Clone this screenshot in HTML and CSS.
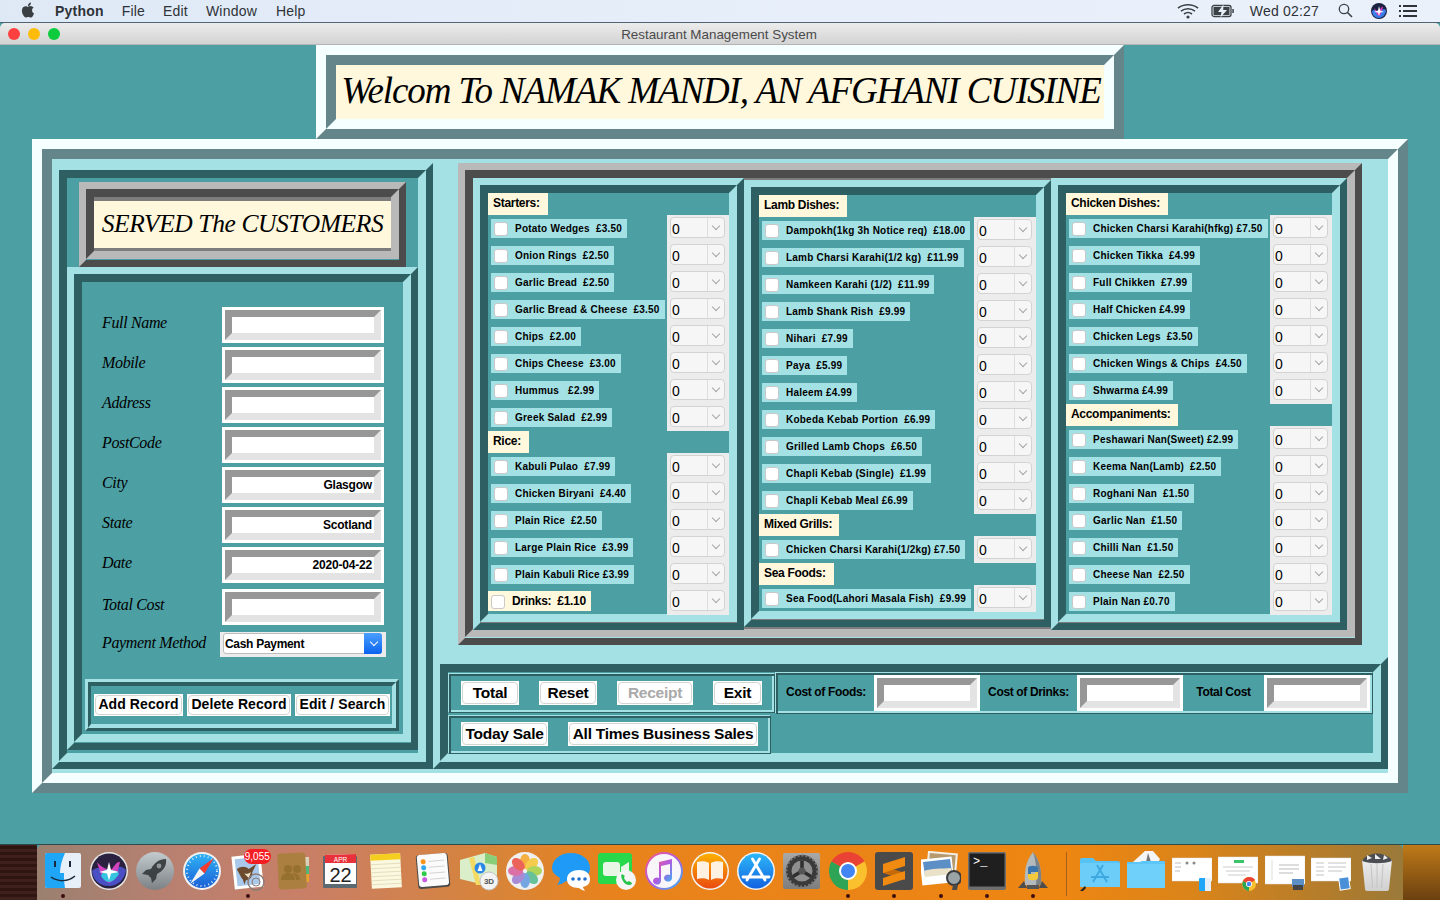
FILE: index.html
```
<!DOCTYPE html>
<html lang="en">
<head>
<meta charset="utf-8">
<title>Restaurant Management System</title>
<link rel="stylesheet" href="styles.css">
</head>
<body>
<header class="menubar">
  <svg class="apple" viewBox="0 0 24 24"><path fill="#3a3f44" d="M18.71 19.5c-.83 1.24-1.71 2.45-3.05 2.47-1.34.03-1.77-.79-3.29-.79-1.53 0-2 .77-3.27.82-1.31.05-2.3-1.32-3.14-2.53C4.25 17 2.94 12.45 4.7 9.39c.87-1.52 2.43-2.48 4.12-2.51 1.28-.02 2.5.87 3.29.87.78 0 2.26-1.07 3.81-.91.65.03 2.47.26 3.64 1.98-.09.06-2.17 1.28-2.15 3.81.03 3.02 2.65 4.03 2.68 4.04-.03.07-.42 1.44-1.38 2.83M13 3.5c.73-.83 1.94-1.46 2.94-1.5.13 1.17-.34 2.35-1.04 3.19-.69.85-1.83 1.51-2.95 1.42-.15-1.15.41-2.35 1.05-3.11z"/></svg>
  <b class="m-app">Python</b><span class="m-file">File</span><span class="m-edit">Edit</span><span class="m-win">Window</span><span class="m-help">Help</span>
  <div class="menu-right">
    <svg class="m-wifi" width="22" height="16" viewBox="0 0 22 16"><g fill="none" stroke="#3c4146" stroke-width="1.6"><path d="M1 5.2C6.5.6 15.5.6 21 5.2"/><path d="M4 8.2c4-3.2 10-3.2 14 0"/><path d="M7 11c2.400-1.800 5.600-1.800 8 0"/></g><circle cx="11" cy="14" r="1.600" fill="#3c4146"/></svg>
    <svg class="m-batt" width="24" height="14" viewBox="0 0 24 14"><rect x="1" y="1.500" width="19" height="11" rx="2" fill="none" stroke="#3c4146" stroke-width="1.300"/><rect x="2.500" y="3" width="16" height="8" fill="#3c4146"/><path d="M12.500 .5 7 8h3.500l-1 5.500L16 6h-3.800z" fill="#e9eff9"/><rect x="21.300" y="5" width="1.500" height="4" fill="#3c4146"/></svg>
    <span class="m-clock">Wed 02:27</span>
    <svg class="m-search" width="15" height="15" viewBox="0 0 15 15"><circle cx="6" cy="6" r="4.700" fill="none" stroke="#3c4146" stroke-width="1.300"/><path d="M9.500 9.500 14 14" stroke="#3c4146" stroke-width="1.600"/></svg>
    <svg class="m-siri" width="16" height="16" viewBox="0 0 16 16"><circle cx="8" cy="8" r="8" fill="#1a2040"/><path d="M1 8c3-3 4 1 7 1s3-5 7-2c0 4-3 8-7 8S1 12 1 8z" fill="#3b7de8"/><path d="M3 5c3 4 4 3 5 3s2-5 4-4c-1 4-2 8-4 9-2-1-4-5-5-8z" fill="#d13fc0"/><path d="M8 3l1.200 4.500L13 9l-4 .6L8 13l-1-3.400L3 9l4-1.500z" fill="#fff"/></svg>
    <svg class="m-list" width="18" height="12" viewBox="0 0 18 12"><g fill="#2f3338"><rect width="2" height="2"/><rect y="5" width="2" height="2"/><rect y="10" width="2" height="2"/><rect x="4" width="14" height="2"/><rect x="4" y="5" width="14" height="2"/><rect x="4" y="10" width="14" height="2"/></g></svg>
  </div>
</header>

<div class="titlebar">
  <div class="lights"><i class="light red"></i><i class="light amber"></i><i class="light green"></i></div>
  <span class="title">Restaurant Management System</span>
</div>

<main class="window">
  <section class="r-main r-head">
    <div class="r-main-in"><h1 class="welcome">Welcom To NAMAK MANDI, AN AFGHANI CUISINE</h1></div>
  </section>

  <section class="r-main r-body">
    <div class="r-main-in body-in">

      <div class="r-teal left">
        <div class="r-teal-in left-in">
          <div class="r-gray served">
            <div class="r-gray-in served-in"><h2 class="served-text">SERVED The CUSTOMERS</h2></div>
          </div>
          <div class="r-teal form-frame">
            <div class="r-teal-in form-in">
              <div class="form-row"><span class="f-label">Full Name</span><div class="entry e-form"><div class="entry-in"></div></div></div>
              <div class="form-row"><span class="f-label">Mobile</span><div class="entry e-form"><div class="entry-in"></div></div></div>
              <div class="form-row"><span class="f-label">Address</span><div class="entry e-form"><div class="entry-in"></div></div></div>
              <div class="form-row"><span class="f-label">PostCode</span><div class="entry e-form"><div class="entry-in"></div></div></div>
              <div class="form-row"><span class="f-label">City</span><div class="entry e-form"><div class="entry-in">Glasgow</div></div></div>
              <div class="form-row"><span class="f-label">State</span><div class="entry e-form"><div class="entry-in">Scotland</div></div></div>
              <div class="form-row"><span class="f-label">Date</span><div class="entry e-form"><div class="entry-in">2020-04-22</div></div></div>
              <div class="form-row row-cost"><span class="f-label">Total Cost</span><div class="entry e-form"><div class="entry-in"></div></div></div>
              <div class="form-row row-pay"><span class="f-label">Payment Method</span>
                <div class="select"><div class="select-in"><span class="select-val">Cash Payment</span><span class="select-btn"></span></div></div>
              </div>
              <div class="record-frame">
                <div class="record-in">
                  <button class="btn b14 w89"><span>Add Record</span></button>
                  <button class="btn b14 w104"><span>Delete Record</span></button>
                  <button class="btn b14 w95"><span>Edit / Search</span></button>
                </div>
              </div>
            </div>
          </div>
        </div>
      </div>

      <div class="right">
        <div class="r-gray menu-frame">
          <div class="r-gray-in menu-in">

            <div class="r-teal col col1"><div class="r-teal-in col-in">
              <div class="head h-starters">Starters:</div>
              <div class="rows">
                <div class="row"><span class="item"><i class="box"></i>Potato Wedges  £3.50</span><div class="spin"><span class="sp">0</span></div></div>
                <div class="row"><span class="item"><i class="box"></i>Onion Rings  £2.50</span><div class="spin"><span class="sp">0</span></div></div>
                <div class="row"><span class="item"><i class="box"></i>Garlic Bread  £2.50</span><div class="spin"><span class="sp">0</span></div></div>
                <div class="row"><span class="item"><i class="box"></i>Garlic Bread &amp; Cheese  £3.50</span><div class="spin"><span class="sp">0</span></div></div>
                <div class="row"><span class="item"><i class="box"></i>Chips  £2.00</span><div class="spin"><span class="sp">0</span></div></div>
                <div class="row"><span class="item"><i class="box"></i>Chips Cheese  £3.00</span><div class="spin"><span class="sp">0</span></div></div>
                <div class="row"><span class="item"><i class="box"></i>Hummus   £2.99</span><div class="spin"><span class="sp">0</span></div></div>
                <div class="row"><span class="item"><i class="box"></i>Greek Salad  £2.99</span><div class="spin"><span class="sp">0</span></div></div>
              </div>
              <div class="head h-rice">Rice:</div>
              <div class="rows">
                <div class="row"><span class="item"><i class="box"></i>Kabuli Pulao  £7.99</span><div class="spin"><span class="sp">0</span></div></div>
                <div class="row"><span class="item"><i class="box"></i>Chicken Biryani  £4.40</span><div class="spin"><span class="sp">0</span></div></div>
                <div class="row"><span class="item"><i class="box"></i>Plain Rice  £2.50</span><div class="spin"><span class="sp">0</span></div></div>
                <div class="row"><span class="item"><i class="box"></i>Large Plain Rice  £3.99</span><div class="spin"><span class="sp">0</span></div></div>
                <div class="row"><span class="item"><i class="box"></i>Plain Kabuli Rice £3.99</span><div class="spin"><span class="sp">0</span></div></div>
                <div class="row"><span class="drink"><i class="box"></i>Drinks:  £1.10</span><div class="spin"><span class="sp">0</span></div></div>
              </div>
            </div></div>

            <div class="r-teal col col2"><div class="r-teal-in col-in">
              <div class="head h-lamb">Lamb Dishes:</div>
              <div class="rows">
                <div class="row"><span class="item"><i class="box"></i>Dampokh(1kg 3h Notice req)  £18.00</span><div class="spin"><span class="sp">0</span></div></div>
                <div class="row"><span class="item"><i class="box"></i>Lamb Charsi Karahi(1/2 kg)  £11.99</span><div class="spin"><span class="sp">0</span></div></div>
                <div class="row"><span class="item"><i class="box"></i>Namkeen Karahi (1/2)  £11.99</span><div class="spin"><span class="sp">0</span></div></div>
                <div class="row"><span class="item"><i class="box"></i>Lamb Shank Rish  £9.99</span><div class="spin"><span class="sp">0</span></div></div>
                <div class="row"><span class="item"><i class="box"></i>Nihari  £7.99</span><div class="spin"><span class="sp">0</span></div></div>
                <div class="row"><span class="item"><i class="box"></i>Paya  £5.99</span><div class="spin"><span class="sp">0</span></div></div>
                <div class="row"><span class="item"><i class="box"></i>Haleem £4.99</span><div class="spin"><span class="sp">0</span></div></div>
                <div class="row"><span class="item"><i class="box"></i>Kobeda Kebab Portion  £6.99</span><div class="spin"><span class="sp">0</span></div></div>
                <div class="row"><span class="item"><i class="box"></i>Grilled Lamb Chops  £6.50</span><div class="spin"><span class="sp">0</span></div></div>
                <div class="row"><span class="item"><i class="box"></i>Chapli Kebab (Single)  £1.99</span><div class="spin"><span class="sp">0</span></div></div>
                <div class="row"><span class="item"><i class="box"></i>Chapli Kebab Meal £6.99</span><div class="spin"><span class="sp">0</span></div></div>
              </div>
              <div class="head h-mixed">Mixed Grills:</div>
              <div class="rows">
                <div class="row"><span class="item"><i class="box"></i>Chicken Charsi Karahi(1/2kg) £7.50</span><div class="spin"><span class="sp">0</span></div></div>
              </div>
              <div class="head h-sea">Sea Foods:</div>
              <div class="rows">
                <div class="row"><span class="item"><i class="box"></i>Sea Food(Lahori Masala Fish)  £9.99</span><div class="spin"><span class="sp">0</span></div></div>
              </div>
            </div></div>

            <div class="r-teal col col3"><div class="r-teal-in col-in">
              <div class="head h-chicken">Chicken Dishes:</div>
              <div class="rows">
                <div class="row"><span class="item"><i class="box"></i>Chicken Charsi Karahi(hfkg) £7.50</span><div class="spin"><span class="sp">0</span></div></div>
                <div class="row"><span class="item"><i class="box"></i>Chicken Tikka  £4.99</span><div class="spin"><span class="sp">0</span></div></div>
                <div class="row"><span class="item"><i class="box"></i>Full Chikken  £7.99</span><div class="spin"><span class="sp">0</span></div></div>
                <div class="row"><span class="item"><i class="box"></i>Half Chicken £4.99</span><div class="spin"><span class="sp">0</span></div></div>
                <div class="row"><span class="item"><i class="box"></i>Chicken Legs  £3.50</span><div class="spin"><span class="sp">0</span></div></div>
                <div class="row"><span class="item"><i class="box"></i>Chicken Wings &amp; Chips  £4.50</span><div class="spin"><span class="sp">0</span></div></div>
                <div class="row"><span class="item"><i class="box"></i>Shwarma £4.99</span><div class="spin"><span class="sp">0</span></div></div>
              </div>
              <div class="head h-acc">Accompaniments:</div>
              <div class="rows">
                <div class="row"><span class="item"><i class="box"></i>Peshawari Nan(Sweet) £2.99</span><div class="spin"><span class="sp">0</span></div></div>
                <div class="row"><span class="item"><i class="box"></i>Keema Nan(Lamb)  £2.50</span><div class="spin"><span class="sp">0</span></div></div>
                <div class="row"><span class="item"><i class="box"></i>Roghani Nan  £1.50</span><div class="spin"><span class="sp">0</span></div></div>
                <div class="row"><span class="item"><i class="box"></i>Garlic Nan  £1.50</span><div class="spin"><span class="sp">0</span></div></div>
                <div class="row"><span class="item"><i class="box"></i>Chilli Nan  £1.50</span><div class="spin"><span class="sp">0</span></div></div>
                <div class="row"><span class="item"><i class="box"></i>Cheese Nan  £2.50</span><div class="spin"><span class="sp">0</span></div></div>
                <div class="row"><span class="item"><i class="box"></i>Plain Nan £0.70</span><div class="spin"><span class="sp">0</span></div></div>
              </div>
            </div></div>

          </div>
        </div>

        <div class="r-teal bottom">
          <div class="r-teal-in bottom-in">
            <div class="bottom-left">
              <div class="thin t-actions">
                <button class="btn b15 w58"><span>Total</span></button>
                <button class="btn b15 w58"><span>Reset</span></button>
                <button class="btn b15 w76 off"><span>Receipt</span></button>
                <button class="btn b15 w49"><span>Exit</span></button>
              </div>
              <div class="thin t-sales">
                <button class="btn b15 w87"><span>Today Sale</span></button>
                <button class="btn b15 w190"><span>All Times Business Sales</span></button>
              </div>
            </div>
            <div class="thin t-costs">
              <span class="c-label c96">Cost of Foods:</span><div class="entry e-cost"><div class="entry-in"></div></div>
              <span class="c-label c97">Cost of Drinks:</span><div class="entry e-cost"><div class="entry-in"></div></div>
              <span class="c-label c81">Total Cost</span><div class="entry e-cost"><div class="entry-in"></div></div>
            </div>
          </div>
        </div>
      </div>

    </div>
  </section>
</main>

<footer class="desk">
  <div class="wall wall-l"></div>
  <nav class="dock">
    <div class="di run"><svg viewBox="0 0 40 40"><rect x="2" y="2" width="36" height="35" rx="2" fill="#e7eff8"/><path d="M4 2h18c-3 7-5 13-5 20h4c-.2 5 .2 10 1 15H4a2 2 0 0 1-2-2V4a2 2 0 0 1 2-2z" fill="#1fa6f7"/><path d="M12 10v6M27 10v6" stroke="#1a2a3a" stroke-width="2"/><path d="M8 26c7 5 17 5 24-1" fill="none" stroke="#1a2a3a" stroke-width="1.500"/></svg></div>
    <div class="di"><svg viewBox="0 0 40 40"><circle cx="20" cy="20" r="19" fill="#e6e6e6"/><circle cx="20" cy="20" r="17.500" fill="#2a2140"/><path d="M3 20c6-7 10 0 17 0s9-9 17-1c-1 9-8 16-17 16S4 29 3 20z" fill="#4a50c4"/><path d="M8 11c6 7 9 6 12 8s6-9 11-8c-2 9-5 19-11 21-6-3-10-13-12-21z" fill="#d043bd"/><path d="M12 25c3-7 6-7 8-6s8-1 10 4c-3 5-7 8-10 8s-6-3-8-6z" fill="#35c4e0"/><path d="M20 11l2 8 8 2-8 1.500-2 7-2-7-8-1.500 8-2z" fill="#fff"/></svg></div>
    <div class="di"><svg viewBox="0 0 40 40"><defs><linearGradient id="lp" x1="0" y1="0" x2="0" y2="1"><stop offset="0" stop-color="#c4cbce"/><stop offset="1" stop-color="#7b8184"/></linearGradient></defs><circle cx="20" cy="20" r="19" fill="url(#lp)"/><path d="M31 8c-7 0-12 4-15 10l-5 1-4 4 6 1 3 3 1 5 4-4 1-5c6-3 10-8 9-15z" fill="#3d4245"/><circle cx="24" cy="15" r="2.400" fill="#90979a"/></svg></div>
    <div class="di"><svg viewBox="0 0 40 40"><defs><linearGradient id="sf" x1="0" y1="0" x2="0" y2="1"><stop offset="0" stop-color="#2fb2f5"/><stop offset="1" stop-color="#1a5fd6"/></linearGradient></defs><circle cx="20" cy="20" r="19" fill="#f2f2f2"/><circle cx="20" cy="20" r="17" fill="url(#sf)"/><circle cx="20" cy="20" r="15" fill="none" stroke="#d5e8f8" stroke-width="2" stroke-dasharray="1 3"/><path d="M32 7 22.500 22.500 17.500 17.500z" fill="#f43b30"/><path d="M8 33 17.500 17.500 22.500 22.500z" fill="#f4f4f4"/></svg></div>
    <div class="di run"><svg viewBox="0 0 40 40"><g transform="rotate(-6 20 20)"><rect x="5" y="4" width="29" height="33" fill="#fff"/><rect x="8" y="7" width="23" height="27" fill="#a9c8ea"/><path d="M9 17c5-3 9-2 12 1l8-4-5 8c0 4-3 7-7 7l-2 4-1-5c-2-3-3-7-5-11z" fill="#6b4a2e"/><path d="M16 22c2 1 5 1 7-1l-3 6z" fill="#efe3c6"/></g><circle cx="28" cy="31" r="8" fill="none" stroke="#8a7d78" stroke-width="1.500"/><circle cx="28" cy="31" r="4" fill="none" stroke="#8a7d78"/></svg><span class="badge">9,055</span></div>
    <div class="di"><svg viewBox="0 0 40 40"><rect x="31" y="6" width="4" height="9" fill="#d9d2b8"/><rect x="31" y="15" width="4" height="8" fill="#4cb87a"/><rect x="31" y="23" width="4" height="8" fill="#e7a32c"/><rect x="4" y="2" width="28" height="36" rx="3" fill="#ab7f3f" transform="rotate(-3 18 20)"/><circle cx="14" cy="18" r="4" fill="#96702f"/><circle cx="23" cy="18" r="4" fill="#96702f"/><path d="M7 29c0-5 3-7 7-7s7 2 7 7zM18 22c5 0 8 2 8 7h-4c0-3-1-5-4-7z" fill="#96702f"/></svg></div>
    <div class="di"><svg viewBox="0 0 40 40"><rect x="3" y="5" width="34" height="32" rx="1" fill="#5a6972"/><path d="M5 4l31-1v30H5z" fill="#fff"/><path d="M5 4l31-1v9H5z" fill="#e8313a"/><text x="20.500" y="10.500" class="cal-m">APR</text><text x="20.500" y="31" class="cal-d">22</text></svg></div>
    <div class="di"><svg viewBox="0 0 40 40"><g transform="rotate(-3 20 20)"><rect x="5" y="3" width="30" height="34" fill="#fbf8e0"/><rect x="5" y="3" width="30" height="6" fill="#f5cf1f"/><path d="M5 13h30M5 17h30M5 21h30M5 25h30M5 29h30M5 33h30" stroke="#d9d4b0" stroke-width=".7"/></g></svg></div>
    <div class="di"><svg viewBox="0 0 40 40"><g transform="rotate(-5 20 20)"><rect x="4" y="3" width="32" height="34" rx="3" fill="#4a4a4a"/><rect x="5" y="3" width="30" height="32" rx="3" fill="#fbfbfb"/><circle cx="11" cy="10" r="2.500" fill="#f7941d"/><circle cx="11" cy="16" r="2.500" fill="#2ea8f0"/><circle cx="11" cy="22" r="2.500" fill="#2fcb4a"/><circle cx="11" cy="28" r="2.500" fill="#c75ae0"/><path d="M16 10h16M16 16h16M16 22h16M16 28h16" stroke="#d3d3d3"/></g></svg></div>
    <div class="di"><svg viewBox="0 0 40 40"><path d="M1 9 26 2l12 4v22l-12 6L1 28z" fill="#d9eec9"/><path d="M10 7l7 27 5 0L15 6z" fill="#f4d962"/><path d="M26 2l12 4v8l-12-2z" fill="#89cf7a"/><circle cx="21" cy="17" r="5.500" fill="#2a88e6"/><path d="M21 13l2.500 7h-5z" fill="#fff"/><circle cx="30" cy="30" r="9" fill="#f3f3f3" stroke="#c4c4c4"/><text x="30" y="33" class="map-3d">3D</text></svg></div>
    <div class="di"><svg viewBox="0 0 40 40"><circle cx="20" cy="20" r="19" fill="#f0f0f0"/><g opacity=".85"><ellipse cx="20" cy="10.500" rx="5" ry="7.500" fill="#f6a623"/><ellipse cx="20" cy="10.500" rx="5" ry="7.500" fill="#f7c531" transform="rotate(45 20 20)"/><ellipse cx="20" cy="10.500" rx="5" ry="7.500" fill="#a5cf3f" transform="rotate(90 20 20)"/><ellipse cx="20" cy="10.500" rx="5" ry="7.500" fill="#50b98a" transform="rotate(135 20 20)"/><ellipse cx="20" cy="10.500" rx="5" ry="7.500" fill="#5f9be0" transform="rotate(180 20 20)"/><ellipse cx="20" cy="10.500" rx="5" ry="7.500" fill="#9c7ad0" transform="rotate(225 20 20)"/><ellipse cx="20" cy="10.500" rx="5" ry="7.500" fill="#d75a9a" transform="rotate(270 20 20)"/><ellipse cx="20" cy="10.500" rx="5" ry="7.500" fill="#ec4c3f" transform="rotate(315 20 20)"/></g></svg></div>
    <div class="di"><svg viewBox="0 0 40 40"><path d="M20 2c10 0 19 6 19 15 0 8-8 14-18 14-2 0-4 0-6-1-2 2-5 3-9 4 2-2 3-5 3-7C4 24 1 21 1 17 1 8 10 2 20 2z" fill="#1f9bf7"/><path d="M28 19c6 0 11 3 11 9s-4 7-7 8c0 1 1 2 2 4-3-1-5-2-6-3-7 0-12-3-12-9s6-9 12-9z" fill="#fff"/><circle cx="22" cy="28" r="1.800" fill="#1f6fd0"/><circle cx="28" cy="28" r="1.800" fill="#1f6fd0"/><circle cx="34" cy="28" r="1.800" fill="#1f6fd0"/></svg></div>
    <div class="di"><svg viewBox="0 0 40 40"><rect x="1" y="2" width="34" height="31" rx="3" fill="#27d84a"/><rect x="6" y="11" width="17" height="14" rx="3" fill="#e8f6e6"/><path d="M24 16l8-5v14l-8-5z" fill="#e8f6e6"/><circle cx="29" cy="29" r="10" fill="#f5f5f5"/><path d="M25 23c-1 1-1 3 0 5 1 3 4 6 7 6 2 0 3-1 3-2l-3-2-2 1c-1-1-3-3-3-5l1-1z" fill="#27c24a"/></svg></div>
    <div class="di"><svg viewBox="0 0 40 40"><defs><linearGradient id="it" x1="0" y1="0" x2="1" y2="1"><stop offset="0" stop-color="#f85a8c"/><stop offset=".5" stop-color="#b05ae0"/><stop offset="1" stop-color="#2fb8f5"/></linearGradient></defs><circle cx="20" cy="20" r="19" fill="url(#it)"/><circle cx="20" cy="20" r="17" fill="#f8f6f8"/><path d="M15 11l13-3v19a4 3.500 0 1 1-2-3V13l-9 2v15a4 3.500 0 1 1-2-3z" fill="url(#it)"/></svg></div>
    <div class="di"><svg viewBox="0 0 40 40"><defs><linearGradient id="bk" x1="0" y1="0" x2="0" y2="1"><stop offset="0" stop-color="#fdb000"/><stop offset="1" stop-color="#ea4a10"/></linearGradient></defs><circle cx="20" cy="20" r="19" fill="#f4f4f4"/><circle cx="20" cy="20" r="17.500" fill="url(#bk)"/><path d="M19 12c-3-2-8-2-12-1v17c4-1 9-1 12 1zM21 12c3-2 8-2 12-1v17c-4-1-9-1-12 1z" fill="#fff1e2"/></svg></div>
    <div class="di"><svg viewBox="0 0 40 40"><defs><linearGradient id="as" x1="0" y1="0" x2="0" y2="1"><stop offset="0" stop-color="#2db8f8"/><stop offset="1" stop-color="#1262e0"/></linearGradient></defs><circle cx="20" cy="20" r="19" fill="#f4f4f4"/><circle cx="20" cy="20" r="17.500" fill="url(#as)"/><path d="M23.500 8 11 29M16.500 8 29 29M7 26h26" stroke="#fff" stroke-width="2.800" stroke-linecap="round"/></svg></div>
    <div class="di"><svg viewBox="0 0 40 40"><defs><linearGradient id="sp" x1="0" y1="0" x2="0" y2="1"><stop offset="0" stop-color="#a9a9a9"/><stop offset="1" stop-color="#7d7d7d"/></linearGradient></defs><rect x="1" y="2" width="37" height="36" rx="2" fill="url(#sp)"/><circle cx="20" cy="20" r="16" fill="#3a3a3a"/><circle cx="20" cy="20" r="15.500" fill="none" stroke="#777" stroke-width="2" stroke-dasharray="2 2"/><circle cx="20" cy="20" r="10.500" fill="#8f8f8f"/><path d="M20 20V9.500M20 20 11 25.500M20 20l9 5.500" stroke="#2e2e2e" stroke-width="3.500"/><circle cx="20" cy="20" r="3.500" fill="#555"/></svg></div>
    <div class="di run"><svg viewBox="0 0 40 40"><path d="M20 20 3.550 10.500A19 19 0 0 1 36.450 10.500z" fill="#ea4335"/><path d="M20 20 36.450 10.500A19 19 0 0 1 20 39z" fill="#fbc02d"/><path d="M20 20 20 39A19 19 0 0 1 3.550 10.500z" fill="#2ea456"/><circle cx="20" cy="20" r="9" fill="#fff"/><circle cx="20" cy="20" r="7" fill="#4285f4"/></svg></div>
    <div class="di run"><svg viewBox="0 0 40 40"><rect x="1" y="1" width="38" height="38" rx="3" fill="#4a4a4a"/><path d="M9 15 31 22v7L9 22z" fill="#c46a08"/><path d="M31 6 9 13v9l22-7zM31 20 9 27v8l22-7z" fill="#f08a10"/></svg></div>
    <div class="di run"><svg viewBox="0 0 40 40"><rect x="6" y="1" width="30" height="24" fill="#f3efe6" transform="rotate(5 20 12)"/><rect x="8" y="3" width="26" height="17" fill="#b59a70" transform="rotate(5 20 12)"/><rect x="0" y="7" width="32" height="26" fill="#fff" transform="rotate(-6 16 20)"/><path d="M2 11l27-3 2 14-27 3z" fill="#5d8fc7"/><path d="M3 20c8-3 17-2 27-3l1 6-27 3z" fill="#e9e2c8"/><circle cx="33" cy="27" r="7" fill="#9aa3a6" stroke="#3c3c3c" stroke-width="2"/><path d="M32 34l-1 5h5l1-5z" fill="#4a4a4a"/></svg></div>
    <div class="di run"><svg viewBox="0 0 40 40"><rect x="1" y="1" width="38" height="38" rx="2" fill="#6e6e6e"/><rect x="2.500" y="2.500" width="35" height="33" fill="#1f1f1f"/><text x="6" y="14" class="term">&gt;_</text></svg></div>
    <div class="di run"><svg viewBox="0 0 40 40"><path d="M11 30 5 37h9zM29 30l6 7h-9z" fill="#4d4d4d"/><path d="M20 1c7 9 9 18 8 33H12C11 19 13 10 20 1z" fill="#b4b9bc"/><path d="M20 1c3 9 4 18 3 33h5C29 19 27 10 20 1z" fill="#7c8286"/><path d="M15 17c0-3 10-3 10 0v4h-7v2h-3z" fill="#3a76ab"/><path d="M25 27c0 3-10 3-10 0v-4h7v-2h3z" fill="#f4c93a"/><rect x="14" y="34" width="12" height="4" fill="#555"/></svg></div>
    <div class="divider"><i></i></div>
    <div class="di"><svg viewBox="0 0 40 40"><path d="M0 9a2 2 0 0 1 2-2h11l3 3h22a2 2 0 0 1 2 2v22a2 2 0 0 1-2 2H2a2 2 0 0 1-2-2z" fill="#56c3f4"/><rect y="12" width="40" height="24" rx="1" fill="#6ccdf8"/><path d="M23 14 13 31M17 14l10 17M11 26h18" stroke="#3ea9e0" stroke-width="2"/><path d="M0 40l5-5 1 2-4 4z" fill="#222"/></svg></div>
    <div class="di"><svg viewBox="0 0 40 40"><path d="M7 11 19 0h8l7 8-3 6z" fill="#f5f5f5"/><path d="M22 2l3 9h-5z" fill="#777"/><path d="M1 11h13l2-1h22a1 1 0 0 1 1 1v25a1 1 0 0 1-1 1H1z" fill="#5bc6f7"/><rect x="1" y="13" width="38" height="24" fill="#6fd0fa"/></svg></div>
    <div class="di"><svg viewBox="0 0 40 40"><rect x="0" y="7" width="40" height="23" fill="#fff" stroke="#ddd" stroke-width=".5"/><path d="M3 12h6M3 16h6M3 20h5" stroke="#bbb"/><circle cx="15" cy="12" r="1.500" fill="#888"/><circle cx="22" cy="12" r="1.500" fill="#888"/><rect x="27" y="27" width="12" height="13" rx="1" fill="#1fa6f7"/><path d="M33 27h6v13h-6z" fill="#e7eff8"/></svg></div>
    <div class="di"><svg viewBox="0 0 40 40"><rect x="0" y="6" width="40" height="26" fill="#fff" stroke="#ddd" stroke-width=".5"/><rect x="16" y="9" width="10" height="3" fill="#3cc46a"/><path d="M5 16h30M8 20h24M10 24h18" stroke="#ccc"/><path d="M25 30a7 7 0 0 1 12-1l-6 4z" fill="#ea4335"/><circle cx="31" cy="33" r="7" fill="#fbc02d"/><path d="M31 33v7a7 7 0 0 1-6-10z" fill="#2ea456"/><path d="M25 30a7 7 0 0 1 12-1l-6 4z" fill="#ea4335"/><circle cx="31" cy="33" r="3" fill="#fff"/><circle cx="31" cy="33" r="2.200" fill="#4285f4"/></svg></div>
    <div class="di"><svg viewBox="0 0 40 40"><rect x="0" y="5" width="40" height="28" fill="#fff" stroke="#ddd" stroke-width=".5"/><path d="M7 9v20" stroke="#ddd"/><path d="M14 14h20M14 18h20M14 22h14" stroke="#bbb"/><rect x="27" y="28" width="12" height="8" fill="#5d8fc7"/><rect x="28" y="34" width="10" height="5" fill="#444"/></svg></div>
    <div class="di"><svg viewBox="0 0 40 40"><rect x="0" y="7" width="40" height="23" fill="#fff" stroke="#ddd" stroke-width=".5"/><path d="M5 12h8M5 16h8M5 20h8M5 24h8M17 12h18M17 16h18M17 20h14" stroke="#c4c4c4"/><g transform="rotate(-8 33 33)"><rect x="28" y="26" width="11" height="13" fill="#fff"/><rect x="29" y="27" width="9" height="11" fill="#4a90d9"/></g></svg></div>
    <div class="di"><svg viewBox="0 0 40 40"><defs><linearGradient id="tr" x1="0" y1="0" x2="0" y2="1"><stop offset="0" stop-color="#ececec"/><stop offset="1" stop-color="#cfcfcf"/></linearGradient></defs><path d="M5 9h30l-3 29a2 2 0 0 1-2 2H10a2 2 0 0 1-2-2z" fill="url(#tr)"/><path d="M7 7c8-6 18-6 26 0l2 3c-9 3-21 3-30 0z" fill="#4a4e52"/><path d="M10 4l5 3-5 2zM18 3l6 5h-6zM27 4l4 3-5 2z" fill="#eee"/><path d="M14 13l1.500 24M20 13v24M26 13l-1.500 24" stroke="#c4c4c4"/></svg></div>
  </nav>
  <div class="wall wall-r"></div>
</footer>
</body>
</html>
```

FILE: styles.css
```
* { box-sizing: border-box; }
html, body { margin: 0; padding: 0; }
body {
  width: 1440px; height: 900px; overflow: hidden;
  display: flex; flex-direction: column;
  font-family: "Liberation Sans", Arial, sans-serif;
  background: #4c9fa3; color: #000;
}
h1, h2 { margin: 0; font-weight: normal; }

/* menu bar */
.menubar {
  height: 23px; flex: none; display: flex; align-items: center;
  background: linear-gradient(90deg, #dfe9f6, #e6eef9 50%, #ebf1fb);
  border-bottom: 1px solid #4f6475;
  font-size: 14px; letter-spacing: .2px; color: #2f3338; padding-bottom: 1px;
}
.apple { width: 18px; height: 18px; margin: -2px 0 0 19px; }
.m-app { margin-left: 18px; }
.m-file { margin-left: 18px; }
.m-edit { margin-left: 18px; }
.m-win { margin-left: 18px; }
.m-help { margin-left: 19px; }
.menu-right { margin-left: auto; display: flex; align-items: center; padding-right: 23px; }
.m-clock { margin-left: 15px; }
.m-batt { margin-left: 12px; }
.m-search { margin-left: 19px; }
.m-siri { margin-left: 18px; }
.m-list { margin-left: 12px; }

/* title bar */
.titlebar {
  height: 22px; flex: none; display: flex; align-items: center;
  background: linear-gradient(#ececec, #d3d3d3);
  border-radius: 5px 5px 0 0; border-bottom: 1px solid #b4b4b4;
}
.lights { display: flex; gap: 8px; margin-left: 8px; }
.light { width: 12px; height: 12px; border-radius: 50%; display: block; }
.red { background: #fc4040; } .amber { background: #fdbc0c; } .green { background: #0ccb3d; }
.title { flex: 1; text-align: center; font-size: 13.400px; color: #4a4a4a; margin: 1px 0 0 -4px; padding-right: 58px; }

/* window */
.window { height: 799px; flex: none; display: flex; flex-direction: column; align-items: center; background: #4c9fa3; }

.r-main { border: 10px solid; border-color: #f6ffff #64868a #64868a #f6ffff; }
.r-main-in { border: 10px solid; border-color: #64868a #f6ffff #f6ffff #64868a; }
.r-head { width: 808px; height: 94px; }
.r-head .r-main-in { height: 74px; background: #fff8dc; }
.welcome {
  height: 54px; background: #fff8dc; text-align: center; padding-left: 2px;
  font: italic 37px/52px "Liberation Serif", serif; letter-spacing: -1.100px; white-space: nowrap;
}
.r-body { width: 1376px; height: 654px; }
.body-in { height: 634px; background: #a4e1e5; display: flex; }

.r-teal { border: 7px solid; border-color: #a4e1e5 #2e5f62 #2e5f62 #a4e1e5; }
.r-teal-in { border: 8px solid; border-color: #2e5f62 #a4e1e5 #a4e1e5 #2e5f62; background: #4c9fa3; }
.r-gray { border: 7px solid; border-color: #b9b9b9 #4c4c4c #4c4c4c #b9b9b9; }
.r-gray-in { border: 8px solid; border-color: #4c4c4c #b9b9b9 #b9b9b9 #4c4c4c; }

/* left panel */
.left { width: 381px; height: 606px; margin-top: 4px; flex: none; }
.left-in { height: 591px; display: flex; flex-direction: column; }
.served { width: 327px; height: 85px; margin: 4px 0 0 12px; flex: none; }
.served-in { height: 70px; background: #7d7d7d; padding: 4px 0; }
.served-text {
  height: 47px; background: #fff8dc; text-align: center;
  font: italic 25.500px/46px "Liberation Serif", serif; letter-spacing: -.4px; white-space: nowrap;
}
.form-frame { width: 351px; height: 483px; flex: none; }
.form-in { height: 468px; padding-top: 25px; }
.form-row { display: flex; align-items: center; height: 36px; margin-bottom: 4px; }
.f-label { width: 140px; padding-left: 20px; font: italic 16px/20px "Liberation Serif", serif; letter-spacing: -.35px; margin-top: -4px; white-space: nowrap; }
.row-cost { margin-top: 6px; margin-bottom: 7px; }
.row-pay { height: 25px; margin-bottom: 0; }

.entry { background: #fff; padding: 3px; height: 36px; flex: none; }
.e-form { width: 162px; }
.e-cost { width: 106px; }
.entry-in {
  height: 30px; border: 7px solid; border-color: #979797 #e3e3e3 #e3e3e3 #979797;
  background: #fff; text-align: right; font: bold 12px/16px "Liberation Sans", sans-serif; padding-right: 2px;
  letter-spacing: -.2px;
}
.select { width: 166px; height: 25px; margin-left: -2px; background: #ececec; padding: 1px 4px 3px 3px; flex: none; }
.select-in {
  height: 21px; display: flex; background: #fff; border: 1px solid #bdbdbd; border-radius: 3px;
  font: bold 12px/20px "Liberation Sans", sans-serif;
}
.select-val { flex: 1; padding-left: 1px; letter-spacing: -.3px; }
.select-btn {
  width: 18px; margin: -1px -1px -1px 0; border-radius: 0 3px 3px 0; position: relative;
  background: linear-gradient(#4aa0ff, #0b63ee);
}
.select-btn::after {
  content: ""; position: absolute; left: 7px; top: 6px; width: 5px; height: 5px;
  border: solid #fff; border-width: 0 1.500px 1.500px 0; transform: rotate(45deg);
}
.record-frame {
  width: 314px; height: 52px; margin: 22px 0 0 3px;
  border: 3px solid; border-color: #a4e1e5 #2e5f62 #2e5f62 #a4e1e5;
}
.record-in {
  height: 46px; border: 3px solid; border-width: 4px 4px 4px 3px; border-color: #2e5f62 #a4e1e5 #a4e1e5 #2e5f62;
  display: flex; gap: 4px; padding: 8px 0 0 3px;
}

/* buttons */
.btn {
  display: block; height: 22px; padding: 1px; border: 0; background: #fff; color: #000; flex: none;
  font-family: "Liberation Sans", sans-serif; font-weight: bold;
}
.btn span {
  display: block; height: 100%; border: 1px solid #d4d4d4; border-radius: 4px; white-space: nowrap; background: #fff;
}
.b14 { font-size: 14px; line-height: 18px; }
.b14 span { line-height: 17px; letter-spacing: .08px; }
.b15 { height: 24px; font-size: 15.500px; }
.b15 span { line-height: 20px; letter-spacing: -.25px; }
.off { color: #a9a9a9; }
.w89 { width: 89px; } .w104 { width: 104px; } .w95 { width: 95px; }
.w58 { width: 58px; } .w76 { width: 76px; } .w49 { width: 49px; } .w87 { width: 87px; } .w190 { width: 190px; }

/* right side */
.right { width: 955px; flex: none; }
.menu-frame { width: 904px; height: 482px; margin: 4px 0 0 25px; }
.menu-in { height: 467px; background: #7d7d7d; display: flex; align-items: flex-start; }
.col { flex: none; }
.col1 { width: 271px; height: 452px; }
.col2 { width: 307px; height: 447px; margin-top: 2px; }
.col3 { width: 296px; height: 452px; }
.col1 .col-in { height: 437px; }
.col2 .col-in { height: 432px; }
.col3 .col-in { height: 437px; }

.head {
  height: 22px; background: #fff8dc; font: bold 12px/20px "Liberation Sans", sans-serif; padding-left: 5px; letter-spacing: -.3px;
}
.h-starters { width: 60px; } .h-rice { width: 41px; } .h-lamb { width: 88px; } .h-mixed { width: 80px; }
.h-sea { width: 75px; } .h-chicken { width: 102px; } .h-acc { width: 112px; }

.row { display: flex; height: 27px; }
.item {
  display: flex; align-items: center; height: 19px; margin: 4px auto 0 3px; padding-right: 5px;
  background: #a4e1e5; font: bold 10px/15px "Liberation Sans", sans-serif; letter-spacing: .22px; white-space: pre;
}
.box {
  display: block; width: 14px; height: 14px; background: #fff; border: 1px solid #c9c9c9; border-radius: 3px;
  margin: 1px 7px 0 3px; flex: none;
}
.drink {
  display: flex; align-items: center; height: 20px; margin: 3px auto 0 0; padding: 0 5px 0 0; background: #fff8dc;
  font: bold 12px/18px "Liberation Sans", sans-serif; white-space: pre; letter-spacing: -.3px;
}
.spin { width: 62px; flex: none; background: #ececec; padding: 2px 4px 0 3px; }
.sp {
  display: block; position: relative; height: 21px; border: 1px solid #d3d3d3; border-radius: 4px; background: #f6f6f6;
  font: 14px/22px "Liberation Sans", sans-serif; padding-left: 1px;
}
.sp::before { content: ""; position: absolute; left: 36px; top: 0; bottom: 0; width: 1px; background: #dedede; }
.sp::after {
  content: ""; position: absolute; left: 42px; top: 5px; width: 5px; height: 5px;
  border: solid #a6a6a6; border-width: 0 1.200px 1.200px 0; transform: rotate(45deg);
}

/* bottom */
.bottom { height: 112px; margin-top: 12px; }
.bottom-in { height: 97px; display: flex; align-items: flex-start; }
.bottom-left { width: 327px; flex: none; }
.thin {
  border: 1px solid; border-color: #a4e1e5 #2e5f62 #2e5f62 #a4e1e5;
  box-shadow: inset 2px 2px 0 #2e5f62, inset -2px -2px 0 #a4e1e5;
}
.t-actions { height: 40px; width: 327px; margin-top: 1px; display: flex; gap: 20px; padding: 7px 0 0 12px; }
.t-sales { height: 39px; width: 323px; margin-top: 2px; display: flex; gap: 20px; padding: 6px 0 0 12px; }
.t-costs { width: 598px; height: 42px; display: flex; align-items: center; padding: 0 2px; }
.c-label { text-align: center; font: bold 12px/16px "Liberation Sans", sans-serif; letter-spacing: -.35px; flex: none; white-space: nowrap; margin-top: -2px; }
.c96 { width: 96px; } .c97 { width: 97px; } .c81 { width: 81px; }

/* dock */
.desk { height: 56px; flex: none; display: flex; border-top: 1px solid #2e4a4a; }
.wall { width: 37px; flex: none; }
.wall-l { background: repeating-linear-gradient(0deg, #40201c 0 3px, #2f1512 3px 6px); }
.wall-r { background: linear-gradient(#c07a18, #6a4010); }
.dock {
  width: 1366px; flex: none; display: flex; padding-left: 3px; border-radius: 5px 5px 0 0;
  background: linear-gradient(90deg, #9a8070 0, #b98070 10%, #c97f66 20%, #d88438 34%, #e8821c 42%, #ee8612 75%, #d9841a 85%, #a87a30 97%, #9a7a3a 100%);
}
.di { width: 46.200px; flex: none; position: relative; padding: 6px 3.100px 0; }
.di svg { display: block; width: 40px; height: 40px; }
.run::after {
  content: ""; position: absolute; left: 21px; top: 49px; width: 4px; height: 4px; border-radius: 50%; background: #3d0d0d;
}
.badge {
  position: absolute; left: 19px; top: 4px; width: 27px; height: 15px; border-radius: 8px; background: #f51d24;
  color: #fff; font-size: 10px; line-height: 15px; text-align: center;
}
.divider { width: 20.600px; flex: none; display: flex; justify-content: flex-end; padding: 7px 9.600px 4px 0; }
.divider i { display: block; width: 1px; background: #a8601a; }
.cal-m { font: 6.500px "Liberation Sans", sans-serif; fill: #fff; text-anchor: middle; }
.cal-d { font: 20px "Liberation Sans", sans-serif; fill: #222; text-anchor: middle; }
.map-3d { font: bold 8px "Liberation Sans", sans-serif; fill: #555; text-anchor: middle; }
.term { font: 12px "Liberation Mono", monospace; fill: #fff; }
```
